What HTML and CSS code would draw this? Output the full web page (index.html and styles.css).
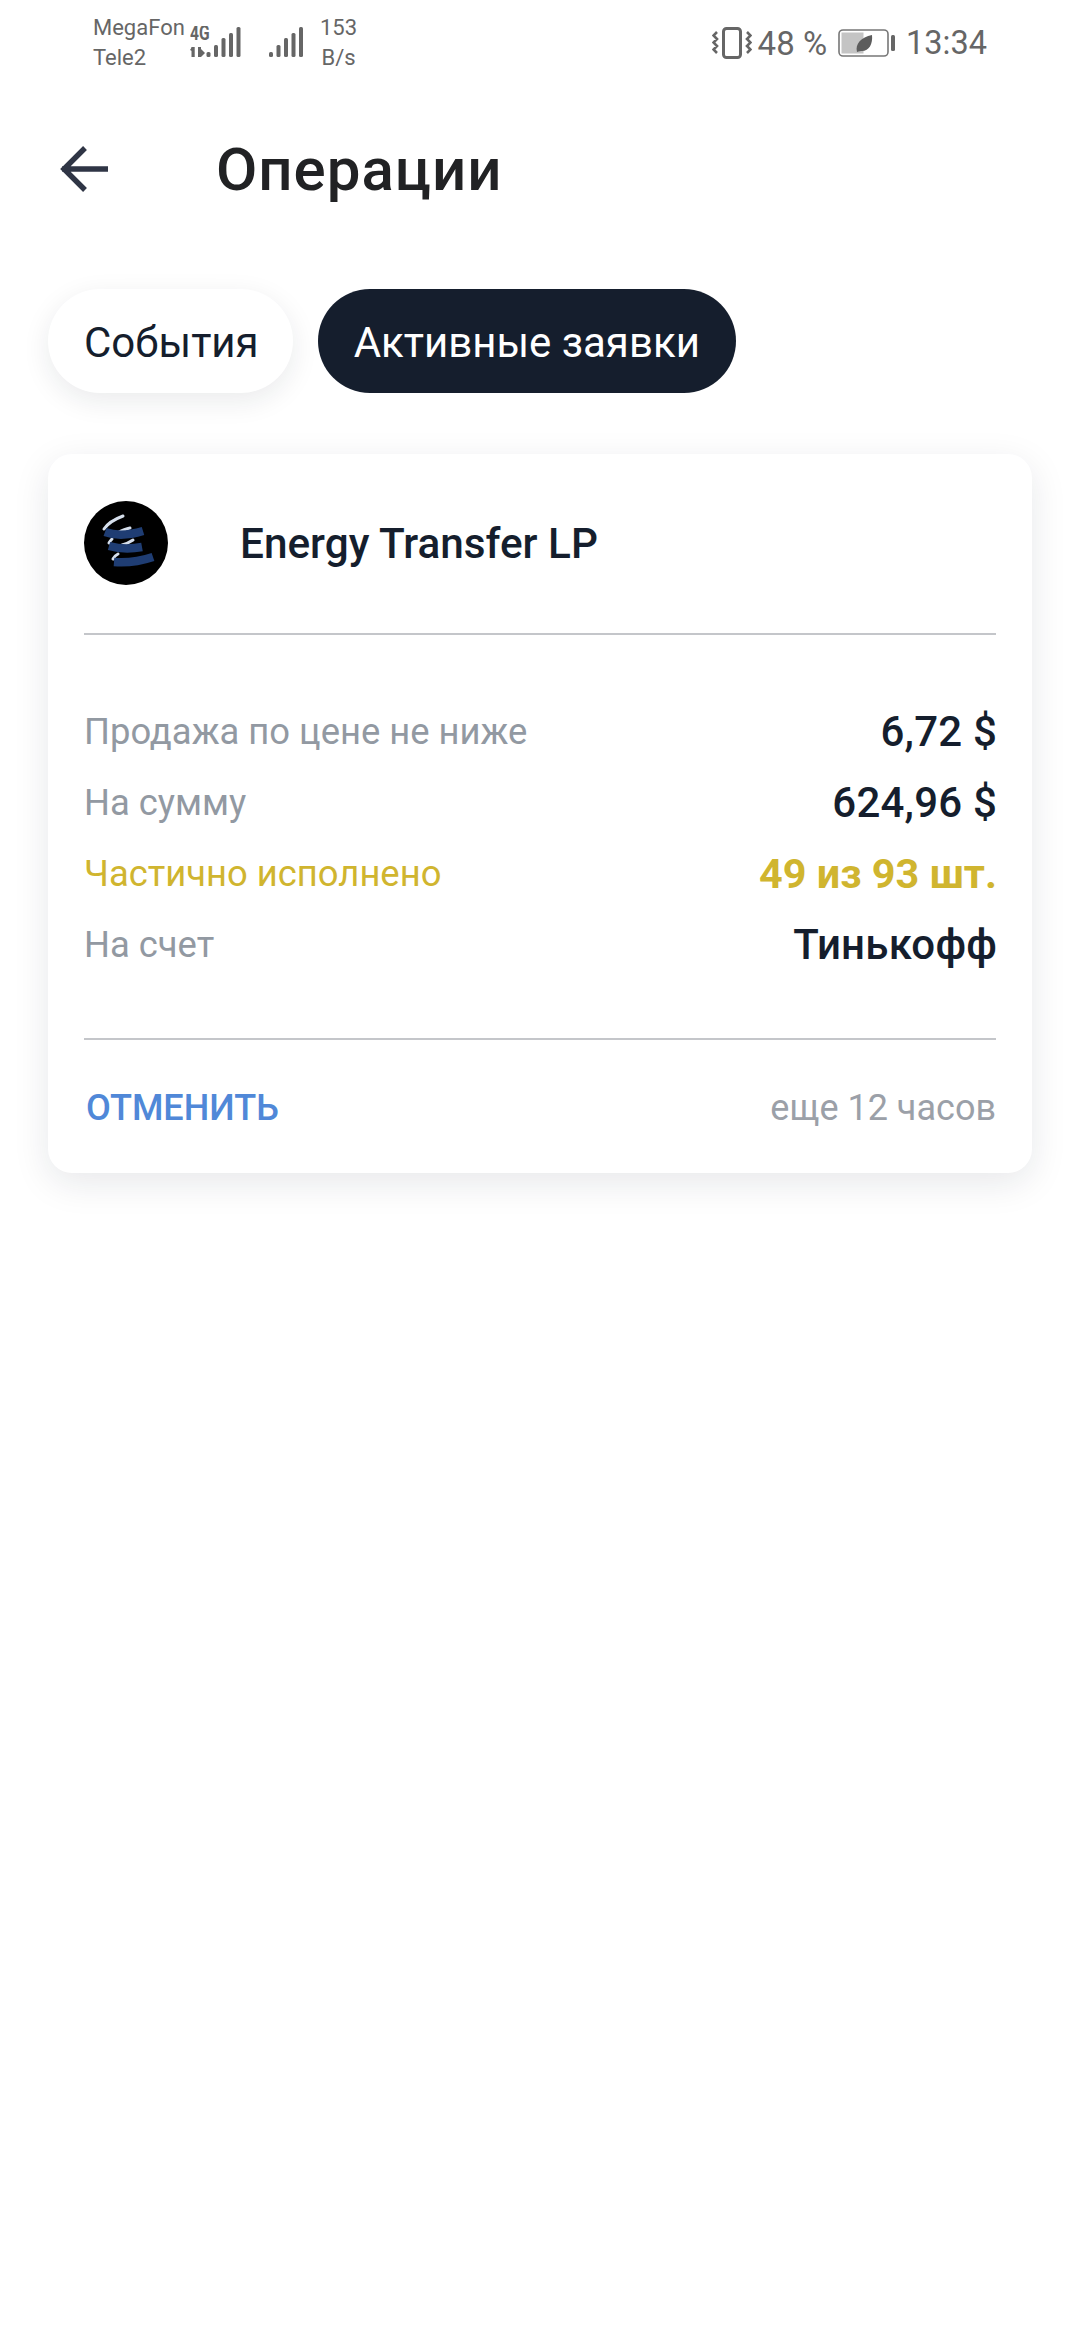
FILE: index.html
```html
<!DOCTYPE html>
<html lang="ru">
<head>
<meta charset="utf-8">
<title>Операции</title>
<link rel="stylesheet" href="styles.css">
</head>
<body>
<div class="status">
  <div class="status-left">
    <div class="carriers"><span>MegaFon</span><span>Tele2</span></div>
    <svg class="sig1" width="52" height="34" viewBox="0 0 52 34">
      <text transform="translate(0 14) scale(0.78 1)" class="net">4G</text>
      <g fill="#666">
        <rect x="1.500" y="21" width="3.200" height="10"/><path d="M0 24l2-3v4z"/>
        <rect x="8" y="21" width="3" height="10"/><path d="M11 23l4 4-4 4z"/>
        <rect x="16.500" y="26" width="4" height="5" rx="1.500"/>
        <rect x="24" y="19" width="4" height="12" rx="1.500"/>
        <rect x="31.500" y="12" width="4" height="19" rx="1.500"/>
        <rect x="39" y="7" width="4" height="24" rx="1.500"/>
        <rect x="46.500" y="1" width="4" height="30" rx="1.500"/>
      </g>
    </svg>
    <svg class="sig2" width="36" height="34" viewBox="0 0 36 34">
      <g fill="#666">
        <rect x="1" y="26" width="4" height="5" rx="1.500"/>
        <rect x="8.500" y="19" width="4" height="12" rx="1.500"/>
        <rect x="16" y="12" width="4" height="19" rx="1.500"/>
        <rect x="23.500" y="7" width="4" height="24" rx="1.500"/>
        <rect x="31" y="1" width="4" height="30" rx="1.500"/>
      </g>
    </svg>
    <div class="speed"><span>153</span><span>B/s</span></div>
  </div>
  <div class="status-right">
    <svg class="vib" width="40" height="32" viewBox="0 0 40 32" fill="none" stroke="#666">
      <rect x="11.500" y="1.500" width="17" height="29" rx="3" stroke-width="3"/>
      <path d="M5 5L1.500 8.500 5 12l-3.500 3.500L5 19l-3.500 3.500L5 26M35 5l3.500 3.500L35 12l3.500 3.500L35 19l3.500 3.500L35 26" stroke-width="2.600"/>
    </svg>
    <span class="pct">48 %</span>
    <svg class="batt" width="57" height="28" viewBox="0 0 57 28">
      <rect x="1" y="1" width="49" height="26" rx="4" fill="none" stroke="#777" stroke-width="1.600"/>
      <rect x="3.500" y="3.500" width="22" height="21" fill="#c4c4c4"/>
      <rect x="53" y="6" width="4" height="16" rx="1.500" fill="#666"/>
      <path d="M19 23c-2-8 4-15 15-17 1 9-3 16-10 16-1 0-3 0-5 1z" fill="#5c5c5c"/>
    </svg>
    <span class="clock">13:34</span>
  </div>
</div>

<header class="topbar">
  <svg class="back" width="48" height="46" viewBox="0 0 48 46" fill="none" stroke="#2f3545" stroke-width="5.400">
    <path d="M2 23h46M25 2L4 23l21 21"/>
  </svg>
  <h1>Операции</h1>
</header>

<nav class="tabs">
  <div class="tab">События</div>
  <div class="tab active">Активные заявки</div>
</nav>

<section class="card">
  <div class="card-head">
    <svg class="logo" width="84" height="84" viewBox="0 0 84 84">
      <circle cx="42" cy="42" r="42" fill="#000"/>
      <g fill="none" stroke="#d6dfec" stroke-width="3" stroke-linecap="round">
        <path d="M20 28C24 22 31 18 39 15"/>
        <path d="M33 32c4-2 8-4 13-5"/>
        <path d="M25 42c1-2 2-3 3-4"/>
        <path d="M38 44c4-1 8-3 11-5"/>
        <path d="M29 58c1-2 3-4 5-5"/>
      </g>
      <g fill="none" stroke="#1f3d73" stroke-width="8.500">
        <path d="M21 31c11 4 25 3 38-1"/>
        <path d="M25 45c11 3 22 3 33 1"/>
        <path d="M30 61c13 1 27-1 39-5"/>
      </g>
    </svg>
    <div class="name">Energy Transfer LP</div>
  </div>
  <div class="rows">
    <div class="row"><span class="label">Продажа по цене не ниже</span><span class="value">6,72 $</span></div>
    <div class="row"><span class="label">На сумму</span><span class="value">624,96 $</span></div>
    <div class="row partial"><span class="label">Частично исполнено</span><span class="value">49 из 93 шт.</span></div>
    <div class="row"><span class="label">На счет</span><span class="value">Тинькофф</span></div>
  </div>
  <div class="card-foot">
    <span class="cancel">ОТМЕНИТЬ</span>
    <span class="left">еще 12 часов</span>
  </div>
</section>
</body>
</html>
```
FILE: styles.css
```css
* { box-sizing: border-box; }
html, body { margin: 0; padding: 0; }
body {
  width: 1080px;
  height: 2340px;
  background: #fff;
  font-family: Roboto, "Noto Sans", sans-serif;
  color: #151e2d;
  overflow: hidden;
}
.status {
  display: flex;
  justify-content: space-between;
  align-items: center;
  height: 84px;
  padding: 2px 93px 0;
  color: #666;
}
.status-left, .status-right { display: flex; align-items: center; }
.carriers, .speed {
  display: flex;
  flex-direction: column;
  flex: none;
  font-size: 22px;
  line-height: 30px;
  white-space: nowrap;
}
.carriers { width: 97px; }
.sig1 { flex: none; }
.net { font: 700 20px Roboto, sans-serif; fill: #666; }
.sig2 { flex: none; margin-left: 26px; }
.speed { align-items: center; margin-left: 16px; }
.vib { flex: none; margin-right: 6px; }
.pct { font-size: 33px; margin-right: 11px; white-space: nowrap; }
.batt { flex: none; }
.clock { font-size: 32.500px; margin-left: 11px; }
.topbar {
  display: flex;
  align-items: center;
  height: 86px;
  margin-top: 42px;
  padding-left: 60px;
}
.back { flex: none; }
h1 {
  margin: 0 0 0 108px;
  font-size: 60px;
  font-weight: 500;
  letter-spacing: 1px;
  color: #212224;
}
.tabs {
  display: flex;
  gap: 25px;
  margin-top: 77px;
  padding-left: 48px;
}
.tab {
  display: flex;
  align-items: center;
  height: 104px;
  padding: 2px 34px 0 36px;
  border-radius: 52px;
  background: #fff;
  font-size: 42px;
  box-shadow: 0 8px 28px rgba(20, 30, 45, 0.09);
}
.tab.active {
  padding-right: 36px;
  background: #151e2d;
  color: #fff;
  box-shadow: none;
}
.card {
  width: 984px;
  height: 719px;
  margin: 61px 0 0 48px;
  padding: 0 36px;
  border-radius: 24px;
  background: #fff;
  box-shadow: 0 10px 36px rgba(20, 30, 45, 0.1);
}
.card-head {
  display: flex;
  align-items: center;
  height: 181px;
  padding-bottom: 2px;
  border-bottom: 2px solid #c4c6ca;
}
.logo { flex: none; }
.name {
  margin: 2px 0 0 72px;
  font-size: 42.300px;
  font-weight: 500;
}
.rows {
  display: flex;
  flex-direction: column;
  height: 405px;
  padding-top: 61px;
  border-bottom: 2px solid #c4c6ca;
}
.row {
  display: flex;
  justify-content: space-between;
  align-items: center;
  height: 71px;
}
.label { font-size: 36.400px; color: #9299a2; }
.value { margin-right: -1px; font-size: 42px; font-weight: 500; letter-spacing: 0.2px; }
.partial .label { color: #d0b52f; }
.partial .value { color: #d0b52f; font-size: 41.400px; font-weight: 700; letter-spacing: 0; }
.card-foot {
  display: flex;
  justify-content: space-between;
  align-items: center;
  height: 134px;
  padding-top: 2px;
}
.cancel { font-size: 36px; font-weight: 500; color: #5088d8; margin-left: 2px; }
.left { font-size: 36px; color: #9ba0a8; }
```
